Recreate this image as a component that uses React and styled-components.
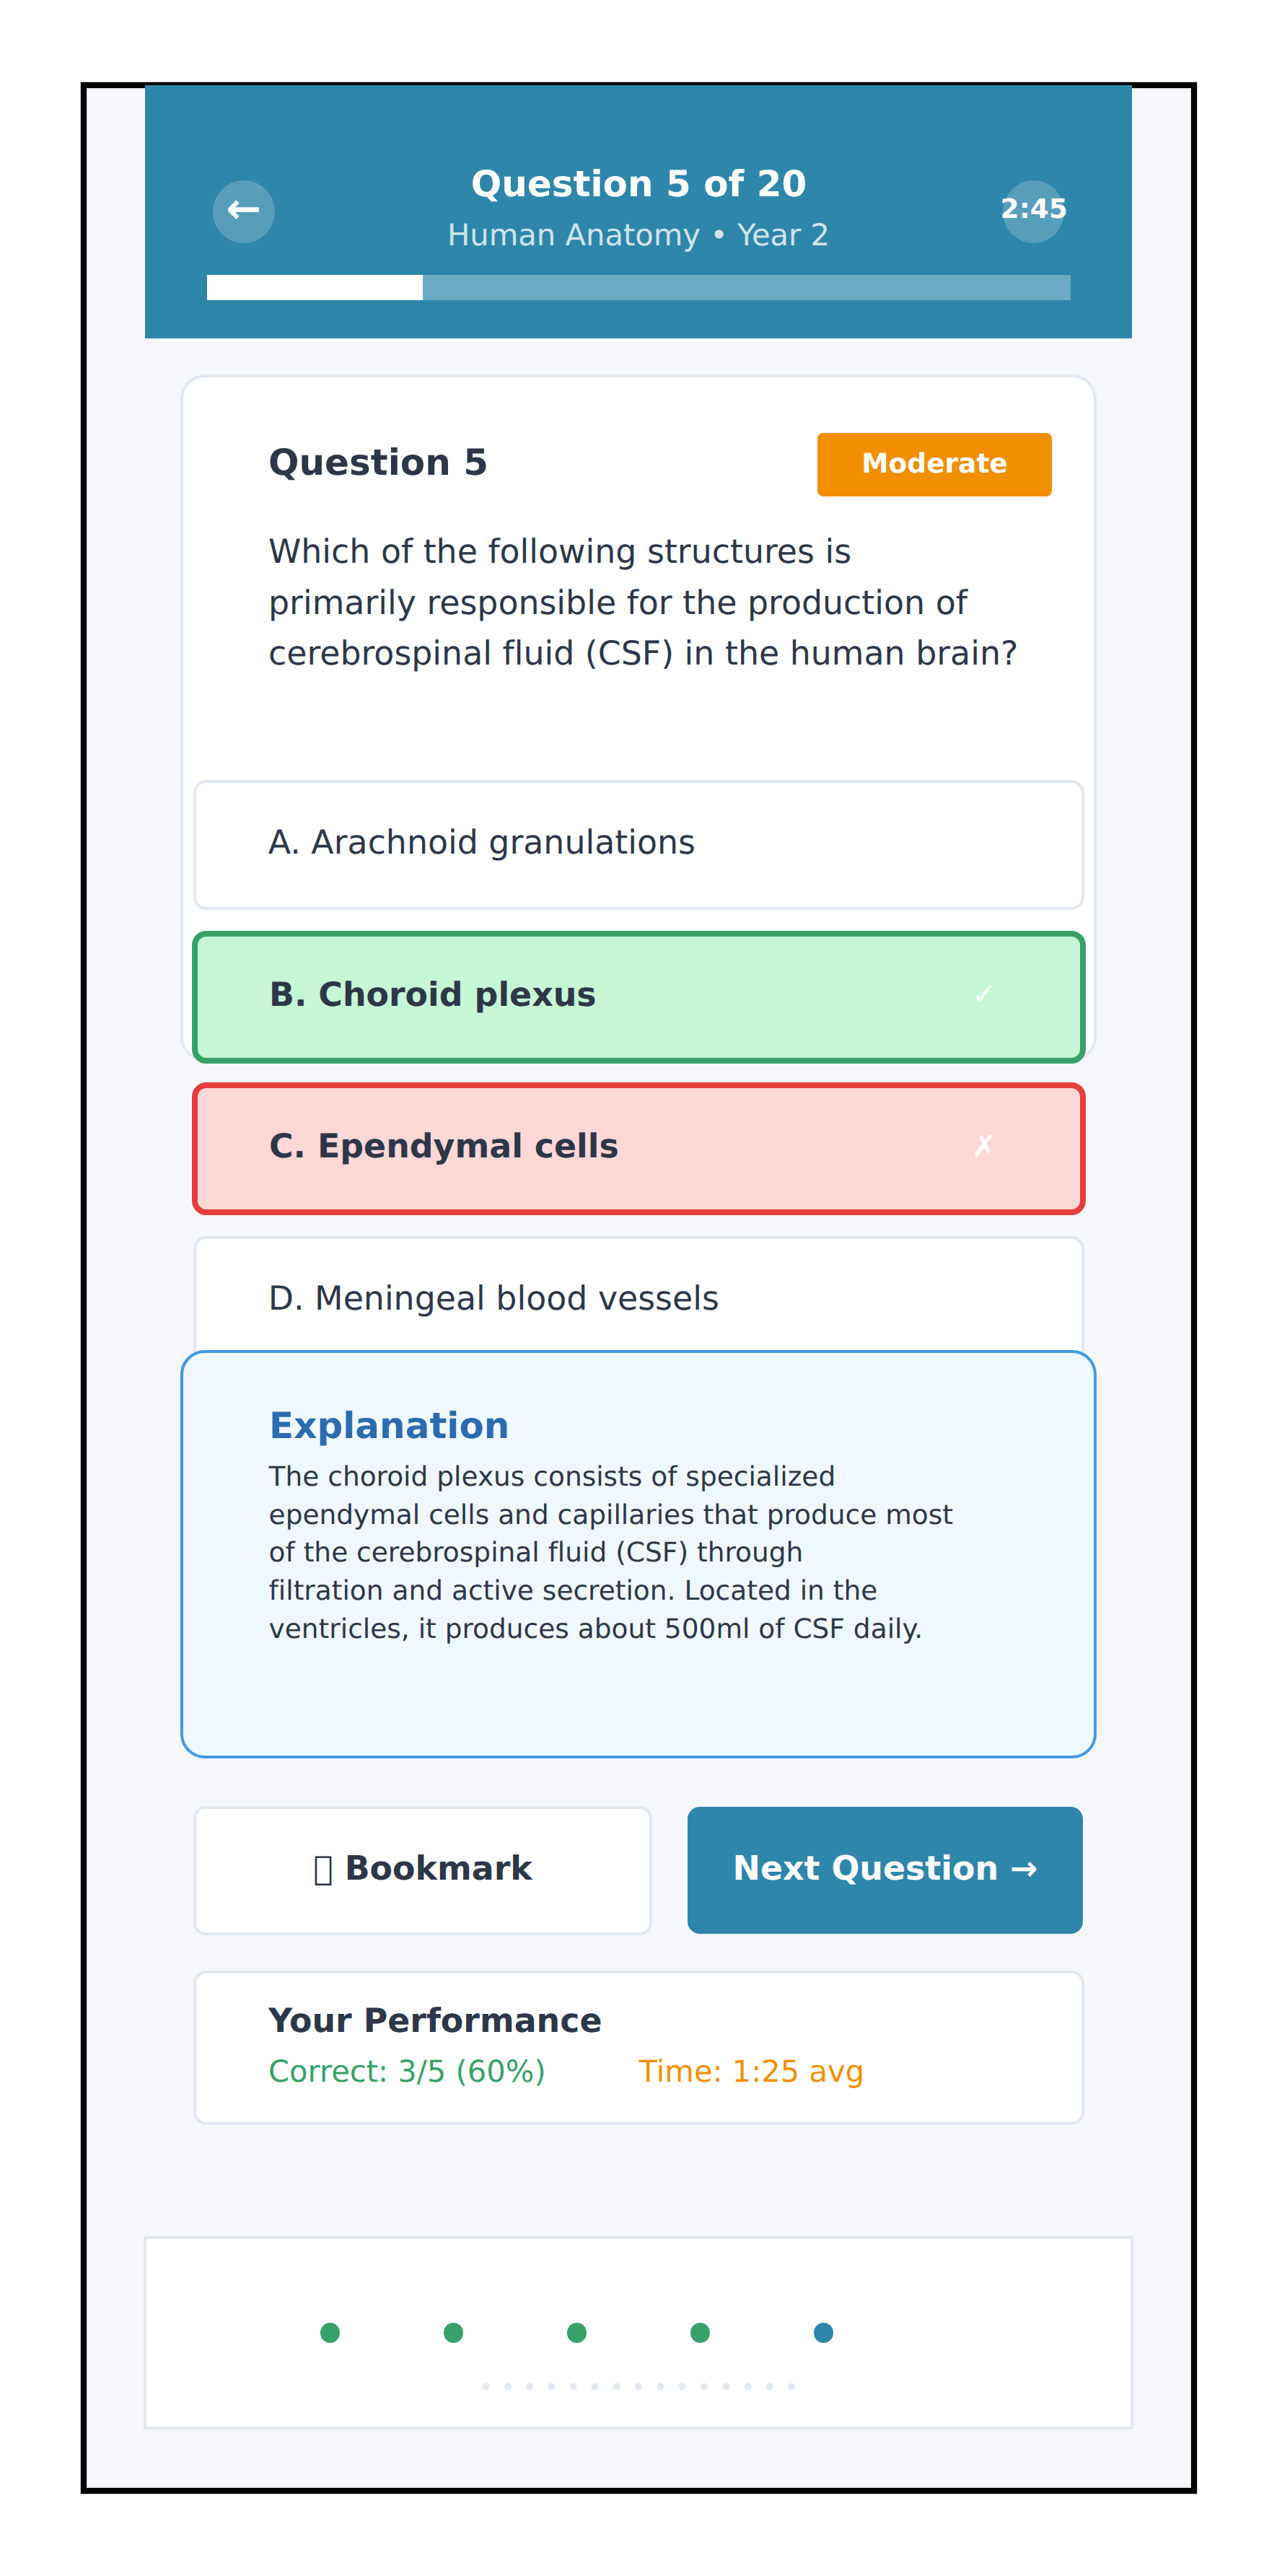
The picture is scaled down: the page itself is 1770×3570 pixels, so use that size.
import React from 'react';
import styled, { createGlobalStyle, css } from 'styled-components';

const color = {
  brand: '#2e86ab',
  page: '#f5f7fb',
  ink: '#2d3748',
  line: '#e2e8f0',
  green: '#38a169',
  greenSoft: '#c6f6d5',
  red: '#e53e3e',
  redSoft: '#fed7d7',
  orange: '#f18f01',
  blue: '#4299e1',
  blueDeep: '#2b6cb0',
  blueSoft: '#f0f8ff',
};

const GlobalStyle = createGlobalStyle`
  * { box-sizing: border-box; }
  body {
    margin: 0;
    background: #ffffff;
    color: ${color.ink};
    font-family: "DejaVu Sans", sans-serif;
    font-variant-ligatures: none;
    text-rendering: geometricPrecision;
  }
  h1, h2, p { margin: 0; }
`;

const Page = styled.main`
  width: 1770px;
  height: 3570px;
  padding: 114px 0 0 112px;
`;

const Device = styled.div`
  width: 1547px;
  height: 3342px;
  border: 8px solid #000000;
  background: ${color.page};
  box-shadow: 0 0 0 1px rgba(0, 0, 0, 0.17), inset 0 0 0 1px rgba(0, 0, 0, 0.17);
  display: flex;
  flex-direction: column;
  white-space: nowrap;
`;

const Header = styled.header`
  flex: none;
  width: 1368px;
  height: 351px;
  margin: -4px 0 0 81px;
  padding: 107.2px 85.5px 0;
  background: ${color.brand};
  color: #ffffff;
`;

const HeaderRow = styled.div`
  display: flex;
  justify-content: space-between;
  height: 131px;
  padding: 0 8.5px;
`;

const RoundButton = styled.button`
  display: flex;
  align-items: center;
  justify-content: center;
  width: 85.5px;
  height: 87.75px;
  margin: 24.4px 0 0;
  padding: 0 0 ${(p) => p.$lift}px ${(p) => p.$shift || 0}px;
  border: 0;
  border-radius: 50%;
  background: rgba(255, 255, 255, 0.2);
  color: #ffffff;
  font: bold ${(p) => p.$size}px/1.164 "DejaVu Sans", sans-serif;
`;

const HeaderText = styled.div`
  text-align: center;
`;

const Title = styled.h1`
  padding-left: 1px;
  font-size: 50px;
  line-height: 60px;
`;

const Subtitle = styled.p`
  margin-top: 10.9px;
  font-size: 41.667px;
  line-height: 60px;
  color: rgba(255, 255, 255, 0.8);
`;

const Progress = styled.div`
  height: 35px;
  margin-top: 24.8px;
  background: rgba(255, 255, 255, 0.3);
`;

const ProgressFill = styled.div`
  width: 25%;
  height: 100%;
  background: #ffffff;
`;

const QuestionCard = styled.section`
  flex: none;
  width: 1270px;
  height: 952px;
  margin: 50px 0 0 130px;
  padding: 77px 58px 0 118px;
  border: 4px solid ${color.line};
  border-radius: 34px;
  background: #ffffff;
`;

const CardHead = styled.div`
  display: flex;
  justify-content: space-between;
  height: 88px;
`;

const CardTitle = styled.h2`
  margin-top: 11.2px;
  font-size: 50px;
  line-height: 60px;
`;

const Badge = styled.span`
  display: flex;
  align-items: center;
  justify-content: center;
  width: 325px;
  padding-bottom: 5px;
  border-radius: 8px;
  background: ${color.orange};
  color: #ffffff;
  font-size: 37.5px;
  font-weight: bold;
`;

const QuestionText = styled.p`
  margin-top: 41.4px;
  font-size: 45.833px;
  line-height: 70.2px;
`;

const Options = styled.div`
  flex: none;
  display: flex;
  flex-direction: column;
  gap: 26.7px;
  width: 1239px;
  margin: -391.9px 0 0 145.6px;
`;

const optionTone = {
  correct: css`
    border-color: ${color.green};
    background: ${color.greenSoft};
  `,
  wrong: css`
    border-color: ${color.red};
    background: ${color.redSoft};
  `,
};

const Option = styled.div`
  display: flex;
  align-items: center;
  justify-content: space-between;
  height: 179.7px;
  margin: 2.1px;
  padding: 0 100px 7.6px;
  border: 4px solid ${color.line};
  border-radius: 18px;
  background: #ffffff;
  font-size: 45.833px;
  ${(p) =>
    p.$tone &&
    css`
      height: 183.9px;
      margin: 0;
      padding: 0 102.5px 7.6px 99.4px;
      border-width: 8px;
      border-radius: 20px;
      font-weight: bold;
      ${optionTone[p.$tone]}
    `}
`;

const Mark = styled.span`
  width: 60px;
  text-align: center;
  color: #ffffff;
  font-size: 41.667px;
`;

const Explanation = styled.section`
  flex: none;
  width: 1270px;
  height: 566px;
  margin: -24px 0 0 130px;
  padding: 70.8px 0 0 118.6px;
  border: 4px solid ${color.blue};
  border-radius: 34px;
  background: ${color.blueSoft};
`;

const ExplanationTitle = styled.h2`
  padding-left: 0.4px;
  font-size: 50px;
  line-height: 60px;
  color: ${color.blueDeep};
`;

const ExplanationText = styled.p`
  margin-top: 14.4px;
  font-size: 37.5px;
  line-height: 52.65px;
`;

const Actions = styled.div`
  flex: none;
  display: flex;
  align-items: center;
  gap: 49px;
  margin: 66px 0 0 148px;
`;

const ActionButton = styled.button`
  width: ${(p) => (p.$primary ? 548 : 636)}px;
  height: ${(p) => (p.$primary ? 176 : 179)}px;
  padding: 0 0 5px;
  border: ${(p) => (p.$primary ? '0' : `4px solid ${color.line}`)};
  border-radius: 17px;
  background: ${(p) => (p.$primary ? color.brand : '#ffffff')};
  color: ${(p) => (p.$primary ? '#ffffff' : color.ink)};
  font: bold 45.833px/1.164 "DejaVu Sans", sans-serif;
`;

const Performance = styled.section`
  flex: none;
  width: 1235px;
  height: 214px;
  margin: 49px 0 0 148px;
  padding: 35.5px 0 0 100px;
  border: 4px solid ${color.line};
  border-radius: 18px;
  background: #ffffff;
`;

const PerformanceTitle = styled.h2`
  font-size: 45.833px;
  line-height: 60px;
`;

const Stats = styled.div`
  display: grid;
  grid-template-columns: 513.6px auto;
  margin-top: 10.8px;
  font-size: 41.667px;
  line-height: 60px;
`;

const Stat = styled.span`
  color: ${(p) => p.$color};
`;

const Footer = styled.footer`
  flex: none;
  width: 1372px;
  height: 268px;
  margin: 154px 0 0 79px;
  padding-top: 116px;
  border: 4px solid ${color.line};
  background: #ffffff;
`;

const Dots = styled.div`
  display: flex;
  gap: 143.6px;
  padding-left: 240.8px;
`;

const Dot = styled.span`
  width: 27.4px;
  height: 28px;
  border-radius: 50%;
  background: ${(p) => (p.$current ? color.brand : color.green)};
`;

const Trail = styled.div`
  margin-top: 42.6px;
  text-align: center;
  font-size: 33.333px;
  line-height: 40px;
  color: ${color.line};
`;

const options = [
  { label: 'A. Arachnoid granulations' },
  { label: 'B. Choroid plexus', tone: 'correct', mark: '✓' },
  { label: 'C. Ependymal cells', tone: 'wrong', mark: '✗' },
  { label: 'D. Meningeal blood vessels' },
];

export default function App() {
  return (
    <>
      <GlobalStyle />
      <Page>
        <Device>
          <Header>
            <HeaderRow>
              <RoundButton $size={58.333} $lift={7.6}>←</RoundButton>
              <HeaderText>
                <Title>Question 5 of 20</Title>
                <Subtitle>Human Anatomy • Year 2</Subtitle>
              </HeaderText>
              <RoundButton $size={37.5} $lift={6.8} $shift={2}>2:45</RoundButton>
            </HeaderRow>
            <Progress>
              <ProgressFill />
            </Progress>
          </Header>

          <QuestionCard>
            <CardHead>
              <CardTitle>Question 5</CardTitle>
              <Badge>Moderate</Badge>
            </CardHead>
            <QuestionText>
              Which of the following structures is
              <br />
              primarily responsible for the production of
              <br />
              cerebrospinal fluid (CSF) in the human brain?
            </QuestionText>
          </QuestionCard>

          <Options>
            {options.map((o) => (
              <Option key={o.label} $tone={o.tone}>
                {o.label}
                {o.mark && <Mark>{o.mark}</Mark>}
              </Option>
            ))}
          </Options>

          <Explanation>
            <ExplanationTitle>Explanation</ExplanationTitle>
            <ExplanationText>
              The choroid plexus consists of specialized
              <br />
              ependymal cells and capillaries that produce most
              <br />
              of the cerebrospinal fluid (CSF) through
              <br />
              filtration and active secretion. Located in the
              <br />
              ventricles, it produces about 500ml of CSF daily.
            </ExplanationText>
          </Explanation>

          <Actions>
            <ActionButton>{'\uFFFF'} Bookmark</ActionButton>
            <ActionButton $primary>Next Question →</ActionButton>
          </Actions>

          <Performance>
            <PerformanceTitle>Your Performance</PerformanceTitle>
            <Stats>
              <Stat $color={color.green}>Correct: 3/5 (60%)</Stat>
              <Stat $color={color.orange}>Time: 1:25 avg</Stat>
            </Stats>
          </Performance>

          <Footer>
            <Dots>
              {[1, 2, 3, 4, 5].map((n) => (
                <Dot key={n} $current={n === 5} />
              ))}
            </Dots>
            <Trail>{Array(15).fill('•').join(' ')}</Trail>
          </Footer>
        </Device>
      </Page>
    </>
  );
}
